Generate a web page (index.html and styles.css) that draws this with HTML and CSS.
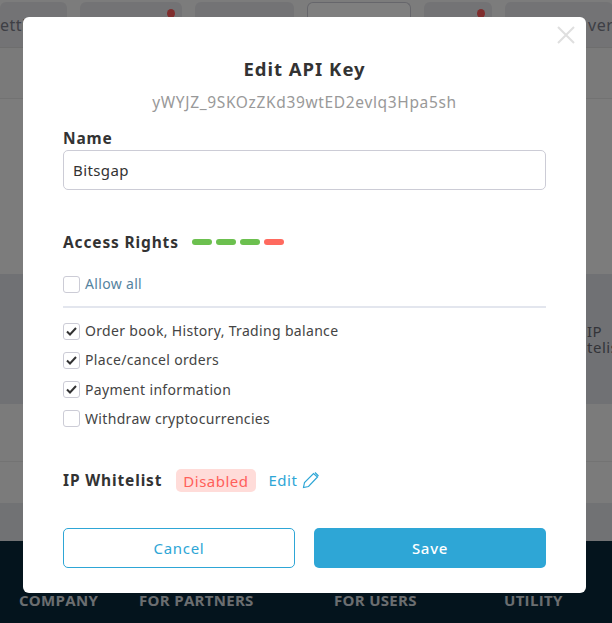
FILE: index.html
```html
<!DOCTYPE html>
<html lang="en">
<head>
    <meta charset="UTF-8">
    <meta name="viewport" content="width=device-width, initial-scale=1.0">
    <title>Edit API Key</title>
    <link rel="stylesheet" href="styles.css">
</head>
<body>
    <div class="page">
        <div class="tabs">
            <div class="tab tab-first">etti</div>
            <div class="tab tab-second"><span class="dot"></span></div>
            <div class="tab tab-third"></div>
            <div class="tab tab-active"></div>
            <div class="tab tab-fifth"><span class="dot"></span></div>
            <div class="tab tab-last">ver</div>
        </div>
        <div class="band-title"></div>
        <div class="band-light"></div>
        <div class="band-table">
            <div class="table-note">IP<br>telis</div>
        </div>
        <div class="band-row"></div>
        <div class="band-row band-row-short"></div>
        <div class="band-gap"></div>
        <footer class="footer">
            <span class="footer-col col-company">COMPANY</span>
            <span class="footer-col col-partners">FOR PARTNERS</span>
            <span class="footer-col col-users">FOR USERS</span>
            <span class="footer-col">UTILITY</span>
        </footer>
    </div>

    <div class="overlay"></div>

    <div class="modal">
        <button class="close" type="button" aria-label="Close">
            <svg width="18" height="18" viewBox="0 0 18 18"><path d="M1 1l16 16M17 1L1 17" fill="none" stroke="#dfdfdf" stroke-width="2"/></svg>
        </button>
        <h1 class="modal-title">Edit API Key</h1>
        <p class="modal-key">yWYJZ_9SKOzZKd39wtED2evlq3Hpa5sh</p>

        <label class="field-label" for="name">Name</label>
        <input class="field-input" id="name" type="text" value="Bitsgap">

        <div class="rights-head">
            <span class="section-label">Access Rights</span>
            <span class="meter">
                <i class="meter-on"></i><i class="meter-on"></i><i class="meter-on"></i><i class="meter-off"></i>
            </span>
        </div>

        <div class="check-row allow-row">
            <span class="box"></span>
            <span class="allow-text">Allow all</span>
        </div>
        <div class="divider"></div>
        <div class="check-list">
            <div class="check-row">
                <span class="box"><svg width="11" height="9" viewBox="0 0 11 9"><path d="M1 4.5l3 3 6-6.5" fill="none" stroke="#333" stroke-width="2"/></svg></span>
                <span>Order book, History, Trading balance</span>
            </div>
            <div class="check-row">
                <span class="box"><svg width="11" height="9" viewBox="0 0 11 9"><path d="M1 4.5l3 3 6-6.5" fill="none" stroke="#333" stroke-width="2"/></svg></span>
                <span>Place/cancel orders</span>
            </div>
            <div class="check-row">
                <span class="box"><svg width="11" height="9" viewBox="0 0 11 9"><path d="M1 4.5l3 3 6-6.5" fill="none" stroke="#333" stroke-width="2"/></svg></span>
                <span>Payment information</span>
            </div>
            <div class="check-row">
                <span class="box"></span>
                <span>Withdraw cryptocurrencies</span>
            </div>
        </div>

        <div class="whitelist">
            <span class="section-label">IP Whitelist</span>
            <span class="badge">Disabled</span>
            <a class="edit-link" href="#">Edit
                <svg width="18" height="18" viewBox="0 0 18 18"><path d="M1.5 16.5l1-5 9-9 4 3.500-9 9.500zM13 1.500l3.500 3.500" fill="none" stroke="#2ea6d6" stroke-width="1.200"/></svg>
            </a>
        </div>

        <div class="actions">
            <button class="btn btn-cancel" type="button">Cancel</button>
            <button class="btn btn-save" type="button">Save</button>
        </div>
    </div>
</body>
</html>
```

FILE: styles.css
```css
body {
    margin: 0;
    font-family: 'Noto Sans', 'Open Sans', sans-serif;
    background-color: #f5f5f5;
    overflow: hidden;
}

.page {
    height: 623px;
    display: flex;
    flex-direction: column;
    background-color: #f8f8f8;
}

.tabs {
    height: 45px;
    padding-top: 2px;
    display: flex;
    gap: 13px;
    border-bottom: 1px solid #dcdcdc;
    flex-shrink: 0;
}

.tab {
    position: relative;
    height: 45px;
    box-sizing: border-box;
    border-radius: 6px 6px 0 0;
    background-color: #e6e6ea;
    color: #7c7e8a;
    font-size: 16px;
    letter-spacing: 0.5px;
    line-height: 46px;
    white-space: nowrap;
    flex-shrink: 0;
}

.tab-first { width: 67px; }
.tab-second { width: 102px; }
.tab-third { width: 99px; }
.tab-fifth { width: 68px; }

.tab-active {
    width: 104px;
    background-color: #fff;
    border: 1px solid #ccccd6;
    border-bottom: 0;
}

.tab-last {
    width: 108px;
    padding-left: 83px;
}

.dot {
    position: absolute;
    top: 7px;
    right: 7px;
    width: 8px;
    height: 9px;
    border-radius: 50%;
    background-color: #ff5a5a;
}

.band-title {
    height: 50px;
    border-bottom: 1px solid #e4e4e4;
    background-color: #f5f5f5;
    flex-shrink: 0;
}

.band-light {
    height: 175px;
    background-color: #f8f8f8;
    flex-shrink: 0;
}

.band-table {
    height: 130px;
    box-sizing: border-box;
    padding: 49px 0 0 587px;
    background-color: #e1e3e8;
    color: #666872;
    font-size: 15px;
    letter-spacing: 0.5px;
    line-height: 16px;
    white-space: nowrap;
    flex-shrink: 0;
}

.band-row {
    height: 57px;
    border-bottom: 1px solid #e6e6e6;
    background-color: #f7f7f7;
    flex-shrink: 0;
}

.band-row-short { height: 41px; border-bottom: 0; }

.band-gap {
    height: 38px;
    background-color: #e3e5e9;
    flex-shrink: 0;
}

.footer {
    flex: 1;
    display: flex;
    padding: 49px 0 0 19px;
    background-color: #08293a;
    color: #d7dde0;
    font-family: 'Open Sans', sans-serif;
    font-size: 15px;
    font-weight: 700;
    letter-spacing: 0.3px;
    line-height: 20px;
}

.footer-col { white-space: nowrap; }
.col-company { width: 120px; }
.col-partners { width: 195px; }
.col-users { width: 170px; }

.overlay {
    position: fixed;
    top: 0;
    left: 0;
    width: 100%;
    height: 100%;
    background-color: rgba(0, 0, 0, 0.5);
}

.modal {
    position: fixed;
    top: 17px;
    left: 23px;
    width: 563px;
    height: 576px;
    box-sizing: border-box;
    padding: 42px 40px 0;
    border-radius: 6px;
    background-color: #fff;
    color: #333;
}

.close {
    position: absolute;
    top: 9px;
    right: 11px;
    width: 18px;
    height: 18px;
    padding: 0;
    border: none;
    background: none;
}

.modal-title {
    margin: 0;
    font-size: 18.5px;
    letter-spacing: 1px;
    line-height: 20px;
    font-weight: 700;
    text-align: center;
}

.modal-key {
    margin: 13px 0 0;
    color: #999;
    font-size: 15.5px;
    letter-spacing: 0.65px;
    line-height: 20px;
    text-align: center;
}

.field-label,
.section-label {
    font-size: 15.5px;
    font-weight: 700;
    letter-spacing: 0.85px;
    line-height: 20px;
    color: #333;
    white-space: nowrap;
}

.field-label {
    display: block;
    margin-top: 16px;
}

.field-input {
    display: block;
    width: 100%;
    height: 40px;
    box-sizing: border-box;
    margin-top: 2px;
    padding: 0 9px;
    border: 1px solid #ccccd6;
    border-radius: 5px;
    color: #333;
    font-family: inherit;
    font-size: 15px;
    letter-spacing: 0.4px;
}

.rights-head {
    display: flex;
    align-items: center;
    gap: 13px;
    margin-top: 42px;
}

.meter {
    display: flex;
    gap: 4px;
}

.meter i {
    width: 20px;
    height: 6px;
    border-radius: 3px;
}

.meter-on { background-color: #6cc04f; }
.meter-off { background-color: #ff6a5f; }

.check-row {
    display: flex;
    align-items: center;
    gap: 5px;
    height: 20px;
    font-size: 14px;
    line-height: 20px;
    color: #444;
    letter-spacing: 0.33px;
}

.allow-row { margin-top: 22px; }
.allow-text { color: #5583a0; }

.box {
    width: 15px;
    height: 15px;
    border: 1px solid #ccccd6;
    border-radius: 3px;
    display: flex;
    align-items: center;
    justify-content: center;
    flex-shrink: 0;
}

.divider {
    height: 2px;
    margin: 12px 0 13px;
    background-color: #e3e6ee;
}

.check-list {
    display: flex;
    flex-direction: column;
    gap: 9.33px;
}

.whitelist {
    display: flex;
    align-items: center;
    margin-top: 40px;
}

.badge {
    margin-left: 14px;
    padding: 0 7px;
    height: 23px;
    border-radius: 5px;
    background-color: #ffdcd9;
    color: #ff5f5a;
    font-size: 15px;
    letter-spacing: 0.5px;
    line-height: 24px;
}

.edit-link {
    display: flex;
    align-items: center;
    gap: 5px;
    margin-left: 13px;
    color: #2ea6d6;
    font-size: 15px;
    letter-spacing: 0.5px;
    text-decoration: none;
}

.actions {
    display: grid;
    grid-template-columns: 1fr 1fr;
    gap: 19px;
    margin-top: 36px;
}

.btn {
    height: 40px;
    border-radius: 5px;
    font-family: inherit;
    font-size: 15px;
    letter-spacing: 0.7px;
}

.btn-cancel {
    border: 1px solid #2ea6d6;
    background-color: #fff;
    color: #2ea6d6;
}

.btn-save {
    border: none;
    background-color: #2ea6d6;
    color: #fff;
    font-weight: 500;
}
```
